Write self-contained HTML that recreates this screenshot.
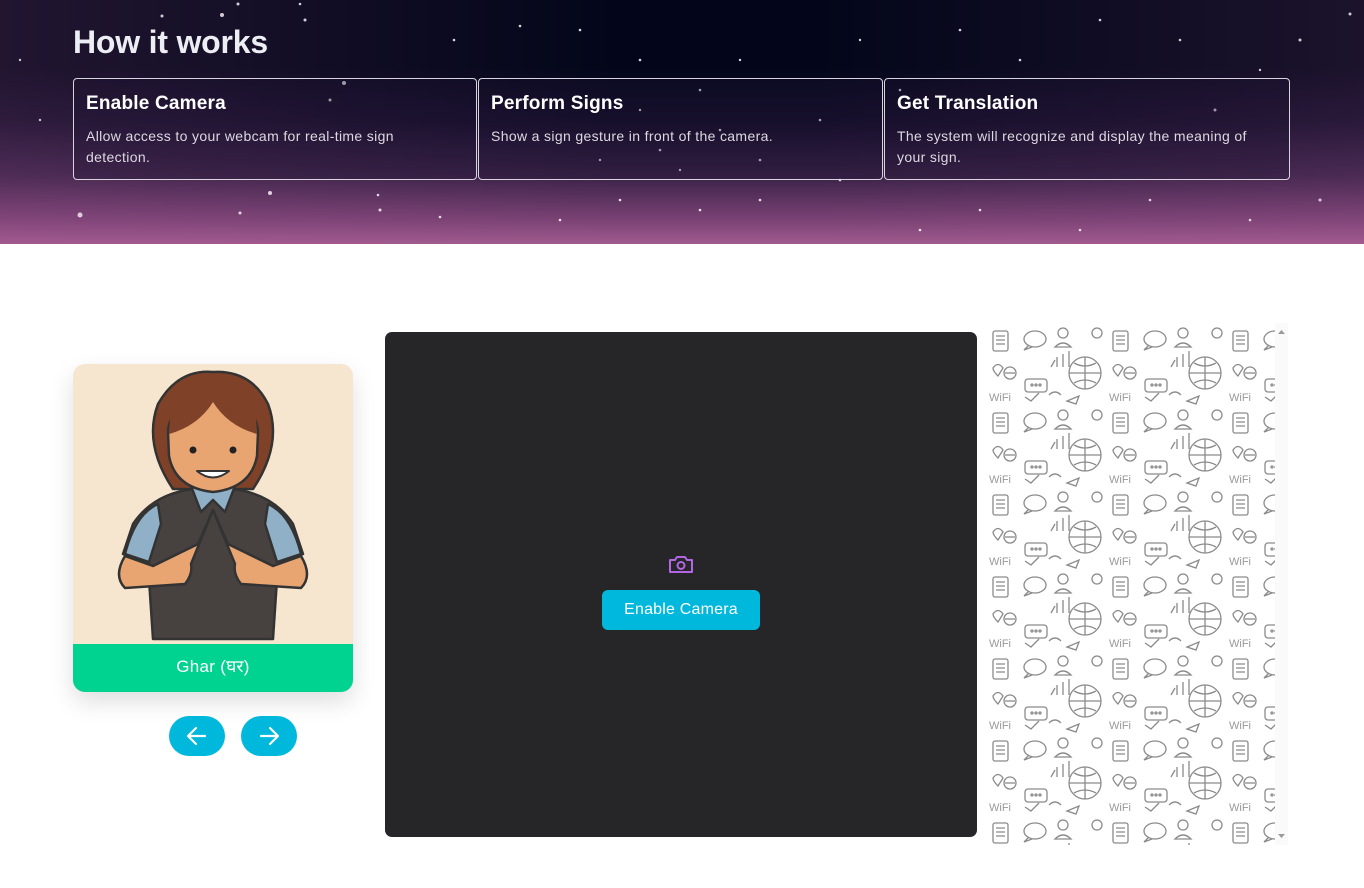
<!DOCTYPE html>
<html><head><meta charset="utf-8"><style>
*{margin:0;padding:0;box-sizing:border-box}
body{width:1364px;height:888px;background:#fff;font-family:"Liberation Sans","Noto Sans CJK SC",sans-serif;position:relative;overflow:hidden}
.hero{position:absolute;left:0;top:0;width:1364px;height:244px;background:linear-gradient(180deg,#03061a 0%,#03061a 28%,#140e2a 50%,#3a2248 72%,#7a4274 90%,#a05a8e 100%);overflow:hidden}
.hero:after{content:"";position:absolute;inset:0;background:linear-gradient(90deg,rgba(170,90,150,.18),rgba(0,0,0,0) 45%,rgba(0,0,0,0) 60%,rgba(170,90,150,.15))}
h1{position:absolute;left:73px;top:24px;color:#eceef3;font-size:32px;font-weight:bold;letter-spacing:-0.2px;z-index:2}
.c{position:absolute;top:78px;height:102px;border:1px solid #d8d4de;border-radius:4px;background:rgba(30,20,50,.3);z-index:2;color:#fff;padding:14px 12px}
.c b{font-size:19px;display:block;margin-bottom:11px;letter-spacing:.2px}
.c p{font-size:14px;line-height:20.5px;color:#ddd8e2;letter-spacing:.35px}
.card{position:absolute;left:73px;top:364px;width:280px;height:328px;border-radius:12px;overflow:hidden;background:#f7e6cf;box-shadow:0 10px 24px rgba(0,0,0,.13)}
.lab{position:absolute;left:0;bottom:0;width:100%;height:48px;background:#00d38f;color:#fff;font-size:17px;text-align:center;line-height:46px;letter-spacing:.3px}
.nb{position:absolute;top:716px;width:56px;height:40px;border-radius:20px;background:#00b8dc}
.vid{position:absolute;left:385px;top:332px;width:592px;height:505px;background:#262628;border-radius:7px}
.btn{position:absolute;left:602px;top:590px;width:158px;height:40px;border-radius:6px;background:#00b8dc;color:#fff;font-size:16px;text-align:center;line-height:40px;letter-spacing:.2px}
.dood{position:absolute;left:985px;top:323px;width:290px;height:522px;background:#fff;overflow:hidden}
.sb{position:absolute;left:1275px;top:323px;width:13px;height:522px;background:#fafafa}
</style></head><body>
<div class="hero">
<svg width="1364" height="244" style="position:absolute;left:0;top:0">
<g fill="#fff" opacity=".85">
<circle cx="80" cy="215" r="2.5"/><circle cx="162" cy="16" r="1.5"/><circle cx="222" cy="15" r="2"/><circle cx="238" cy="4" r="1.5"/><circle cx="300" cy="4" r="1.3"/><circle cx="344" cy="83" r="2"/><circle cx="305" cy="20" r="1.5"/><circle cx="330" cy="100" r="1.5"/><circle cx="270" cy="193" r="2"/><circle cx="240" cy="213" r="1.5"/><circle cx="380" cy="210" r="1.5"/><circle cx="378" cy="195" r="1.3"/><circle cx="440" cy="217" r="1.3"/><circle cx="454" cy="40" r="1.3"/><circle cx="520" cy="26" r="1.3"/><circle cx="580" cy="30" r="1.3"/><circle cx="640" cy="60" r="1.3"/><circle cx="700" cy="90" r="1.3"/><circle cx="720" cy="130" r="1.3"/><circle cx="660" cy="150" r="1.3"/><circle cx="760" cy="160" r="1.3"/><circle cx="820" cy="120" r="1.3"/><circle cx="840" cy="180" r="1.3"/><circle cx="900" cy="90" r="1.3"/><circle cx="960" cy="30" r="1.3"/><circle cx="1020" cy="60" r="1.3"/><circle cx="1100" cy="20" r="1.3"/><circle cx="1180" cy="40" r="1.3"/><circle cx="1215" cy="110" r="1.5"/><circle cx="1300" cy="40" r="1.5"/><circle cx="1350" cy="14" r="1.5"/><circle cx="1320" cy="200" r="1.5"/><circle cx="1250" cy="220" r="1.3"/><circle cx="1150" cy="200" r="1.3"/><circle cx="1080" cy="230" r="1.3"/><circle cx="980" cy="210" r="1.3"/><circle cx="920" cy="230" r="1.3"/><circle cx="620" cy="200" r="1.3"/><circle cx="560" cy="220" r="1.3"/><circle cx="700" cy="210" r="1.3"/><circle cx="760" cy="200" r="1.3"/><circle cx="640" cy="110" r="1.2"/><circle cx="680" cy="170" r="1.2"/><circle cx="600" cy="160" r="1.2"/><circle cx="740" cy="60" r="1.2"/><circle cx="860" cy="40" r="1.2"/><circle cx="1260" cy="70" r="1.2"/><circle cx="40" cy="120" r="1.2"/><circle cx="20" cy="60" r="1.2"/>
</g></svg>
</div>
<h1>How it works</h1>
<div class="c" style="left:73px;width:404px"><b>Enable Camera</b><p>Allow access to your webcam for real-time sign<br>detection.</p></div>
<div class="c" style="left:478px;width:405px"><b>Perform Signs</b><p>Show a sign gesture in front of the camera.</p></div>
<div class="c" style="left:884px;width:406px"><b>Get Translation</b><p>The system will recognize and display the meaning of<br>your sign.</p></div>

<div class="card">
<svg width="280" height="280" viewBox="0 0 280 280" style="position:absolute;left:0;top:0" stroke="#333" stroke-width="2.5" stroke-linejoin="round">
<path d="M100 125 Q70 80 85 40 Q105 5 140 8 Q178 6 195 40 Q210 80 180 125 Z" fill="#7f4229"/>
<path d="M60 160 Q80 130 120 125 L160 125 Q200 130 220 160 L230 190 L205 200 L200 275 L80 275 L75 200 L50 190 Z" fill="#474240"/>
<path d="M85 140 Q62 150 52 190 L76 198 L88 160 Z" fill="#8fb0c6"/>
<path d="M195 140 Q218 150 228 190 L204 198 L192 160 Z" fill="#8fb0c6"/>
<path d="M118 122 L128 148 L140 136 L152 148 L162 122 Z" fill="#8fb0c6"/>
<path d="M52 192 Q40 212 52 224 L112 220 Q120 210 118 200 L140 146 L125 180 L80 202 Z" fill="#e8a572"/>
<path d="M228 192 Q240 212 228 224 L168 220 Q160 210 162 200 L140 146 L155 180 L200 202 Z" fill="#e8a572"/>
<path d="M95 68 Q96 40 140 36 Q184 40 185 68 L184 92 Q178 124 140 128 Q102 124 96 92 Z" fill="#e8a572"/>
<path d="M96 70 Q125 62 140 38 Q155 62 184 70 L182 40 Q140 8 98 40 Z" fill="#7f4229" stroke="none"/>
<circle cx="120" cy="86" r="3.5" fill="#222" stroke="none"/><circle cx="160" cy="86" r="3.5" fill="#222" stroke="none"/>
<path d="M124 107 Q140 120 156 107 Z" fill="#fff" stroke-width="2"/>
</svg>
<div class="lab">Ghar (घर)</div>
</div>
<div class="nb" style="left:169px"><svg width="56" height="40"><path d="M36 20H20M27 12l-8 8 8 8" stroke="#fff" stroke-width="2.2" fill="none" stroke-linecap="round" stroke-linejoin="round"/></svg></div>
<div class="nb" style="left:241px"><svg width="56" height="40"><path d="M20 20h16M29 12l8 8-8 8" stroke="#fff" stroke-width="2.2" fill="none" stroke-linecap="round" stroke-linejoin="round"/></svg></div>

<div class="vid"></div>
<svg width="28" height="24" style="position:absolute;left:667px;top:552px" fill="none" stroke="#b266e6" stroke-width="2" stroke-linejoin="round"><path d="M3 8h5l2-3h8l2 3h5v12H3z"/><circle cx="14" cy="13.5" r="3.5"/></svg>
<div class="btn">Enable Camera</div>

<div class="dood"><svg width="290" height="522"><defs><pattern id="p" width="120" height="82" patternUnits="userSpaceOnUse">
<g fill="none" stroke="#8a8a8a" stroke-width="1.3">
<circle cx="100" cy="50" r="16"/><path d="M84 50h32M100 34v32M89 40q11 6 22 0M89 60q11-6 22 0"/>
<rect x="40" y="56" width="22" height="13" rx="3"/><circle cx="47" cy="62" r="1"/><circle cx="51" cy="62" r="1"/><circle cx="55" cy="62" r="1"/>
<path d="M66 44l4-7M72 44v-10M78 44v-13M84 44v-16"/>
<rect x="8" y="8" width="15" height="20" rx="2"/><path d="M11 13h9M11 17h9M11 21h9"/>
<ellipse cx="50" cy="16" rx="11" ry="8"/><path d="M44 22l-5 5 8-3"/>
<path d="M8 45q5-7 10 0q-5 8-5 8q-5-5-5-8z"/><circle cx="78" cy="10" r="5"/><path d="M70 24q8-8 16 0z"/>
<circle cx="112" cy="10" r="5"/><circle cx="25" cy="50" r="6"/><path d="M20 50h10"/>
<text x="4" y="78" font-size="11" fill="#999" stroke="none" font-family="Liberation Sans">WiFi</text>
<path d="M40 74l6 4 8-8M82 78l12-5-3 8z"/><path d="M64 72q6-6 12 0"/>
</g></pattern></defs><rect width="290" height="522" fill="url(#p)"/></svg></div>
<div class="sb"><svg width="13" height="522"><path d="M3 11l3.5-4 3.5 4z M3 511l3.5 4 3.5-4z" fill="#999"/></svg></div>
</body></html>
